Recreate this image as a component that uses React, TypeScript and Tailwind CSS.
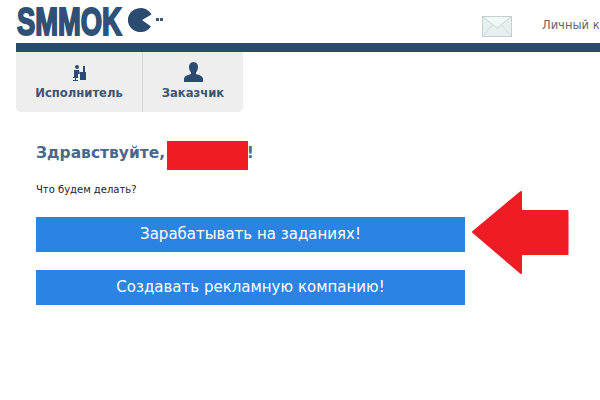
function Pacman() {
  return (
    <svg width="36" height="26" viewBox="0 0 36 26" className="ml-[5px] mt-[-1px]">
      <path d="M23.5 6.5 L14 12 L23 18.5 A12.5 12 0 1 1 23.5 6.5 Z" fill="#2b4b70" />
      <rect x="28" y="10" width="3" height="3" fill="#3b5878" />
      <rect x="32" y="10" width="3" height="3" fill="#3b5878" />
    </svg>
  );
}

function Envelope() {
  return (
    <svg width="30" height="21" viewBox="0 0 30 21">
      <rect x="0.5" y="0.5" width="29" height="20" fill="#e6f0f0" stroke="#c4d0d0" />
      <path d="M1 1 L15 12 L29 1" fill="#f2f7f7" stroke="#c4d0d0" />
      <path d="M1 20 L11 8 M29 20 L19 8" fill="none" stroke="#d0dcdc" />
    </svg>
  );
}

function WorkerIcon() {
  return (
    <svg width="15" height="17" viewBox="0 0 15 17" fill="#2b4b70">
      <circle cx="5" cy="3" r="2" />
      <path d="M2 6 h5 l1 4 h-2 v3 h-4 z" />
      <rect x="8" y="8" width="6" height="8" />
      <rect x="11" y="2" width="2" height="6" />
      <path d="M1 13 h5 v1 h-2 v2 h2 v1 h-5 v-1 h2 v-2 h-2 z" />
    </svg>
  );
}

function PersonIcon() {
  return (
    <svg width="19" height="20" viewBox="0 0 19 20" fill="#2b4b70">
      <path d="M9.5 0 C12.5 0 14 2.2 14 5 C14 7.5 13 9.5 12 10.5 V12 C15 13 19 14 19 17 V20 H0 V17 C0 14 4 13 7 12 V10.5 C6 9.5 5 7.5 5 5 C5 2.2 6.5 0 9.5 0 Z" />
    </svg>
  );
}

function Arrow() {
  return (
    <svg width="98" height="86" viewBox="0 0 98 86" className="absolute left-[471px] top-[190px]">
      <path
        d="M2 42 L50 2 V21 H96.5 V64 H50 V83 Z"
        fill="#ee1c25"
        stroke="#ee1c25"
        strokeWidth="2"
        strokeLinejoin="round"
      />
    </svg>
  );
}

export default function App() {
  return (
    <div className="relative h-[400px] w-[600px] overflow-hidden bg-white font-['DejaVu_Sans',sans-serif]">
      <header className="flex h-[43px] items-center pl-[17px]">
        <div className="flex w-[106px] items-center">
          <span className="origin-left scale-x-[0.72] font-['Liberation_Sans',sans-serif] text-[38px] leading-none font-bold whitespace-nowrap text-[#2f5077] [-webkit-text-stroke:2px_#2f5077]">
            SMMOK
          </span>
        </div>
        <Pacman />
        <div className="mt-[9px] ml-[318px] flex items-center">
          <Envelope />
          <span className="ml-[30px] text-[11.5px] whitespace-nowrap text-[#666]">Личный к</span>
        </div>
      </header>

      <div className="ml-4 h-[9px] bg-[#2a4a6e]" />

      <nav className="ml-4 flex h-[60px] w-[227px] rounded-b-[5px] bg-[#eeeeee] text-[11.6px] font-bold text-[#3c5573]">
        <a className="flex w-[127px] flex-col items-center border-r border-[#d6d6d6] pt-[12px]">
          <WorkerIcon />
          <span className="mt-[4px]">Исполнитель</span>
        </a>
        <a className="flex flex-1 flex-col items-center pt-[10px]">
          <PersonIcon />
          <span className="mt-[3px]">Заказчик</span>
        </a>
      </nav>

      <main className="ml-9 w-[429px] pt-[31px]">
        <h1 className="text-[15.5px] leading-5 font-bold whitespace-nowrap text-[#48688c]">
          Здравствуйте, <span className="inline-block w-[76px]" />!
        </h1>
        <p className="mt-[21px] text-[10px] leading-3 text-[#222]">Что будем делать?</p>
        <button className="mt-[21px] block h-[35px] w-full bg-[#2b84e4] text-[15px] text-white">
          Зарабатывать на заданиях!
        </button>
        <button className="mt-[18px] block h-[35px] w-full bg-[#2b84e4] text-[15px] text-white">
          Создавать рекламную компанию!
        </button>
      </main>

      <div className="absolute left-[167px] top-[141px] h-[29px] w-[81px] bg-[#ee1c25]" />
      <Arrow />
    </div>
  );
}
